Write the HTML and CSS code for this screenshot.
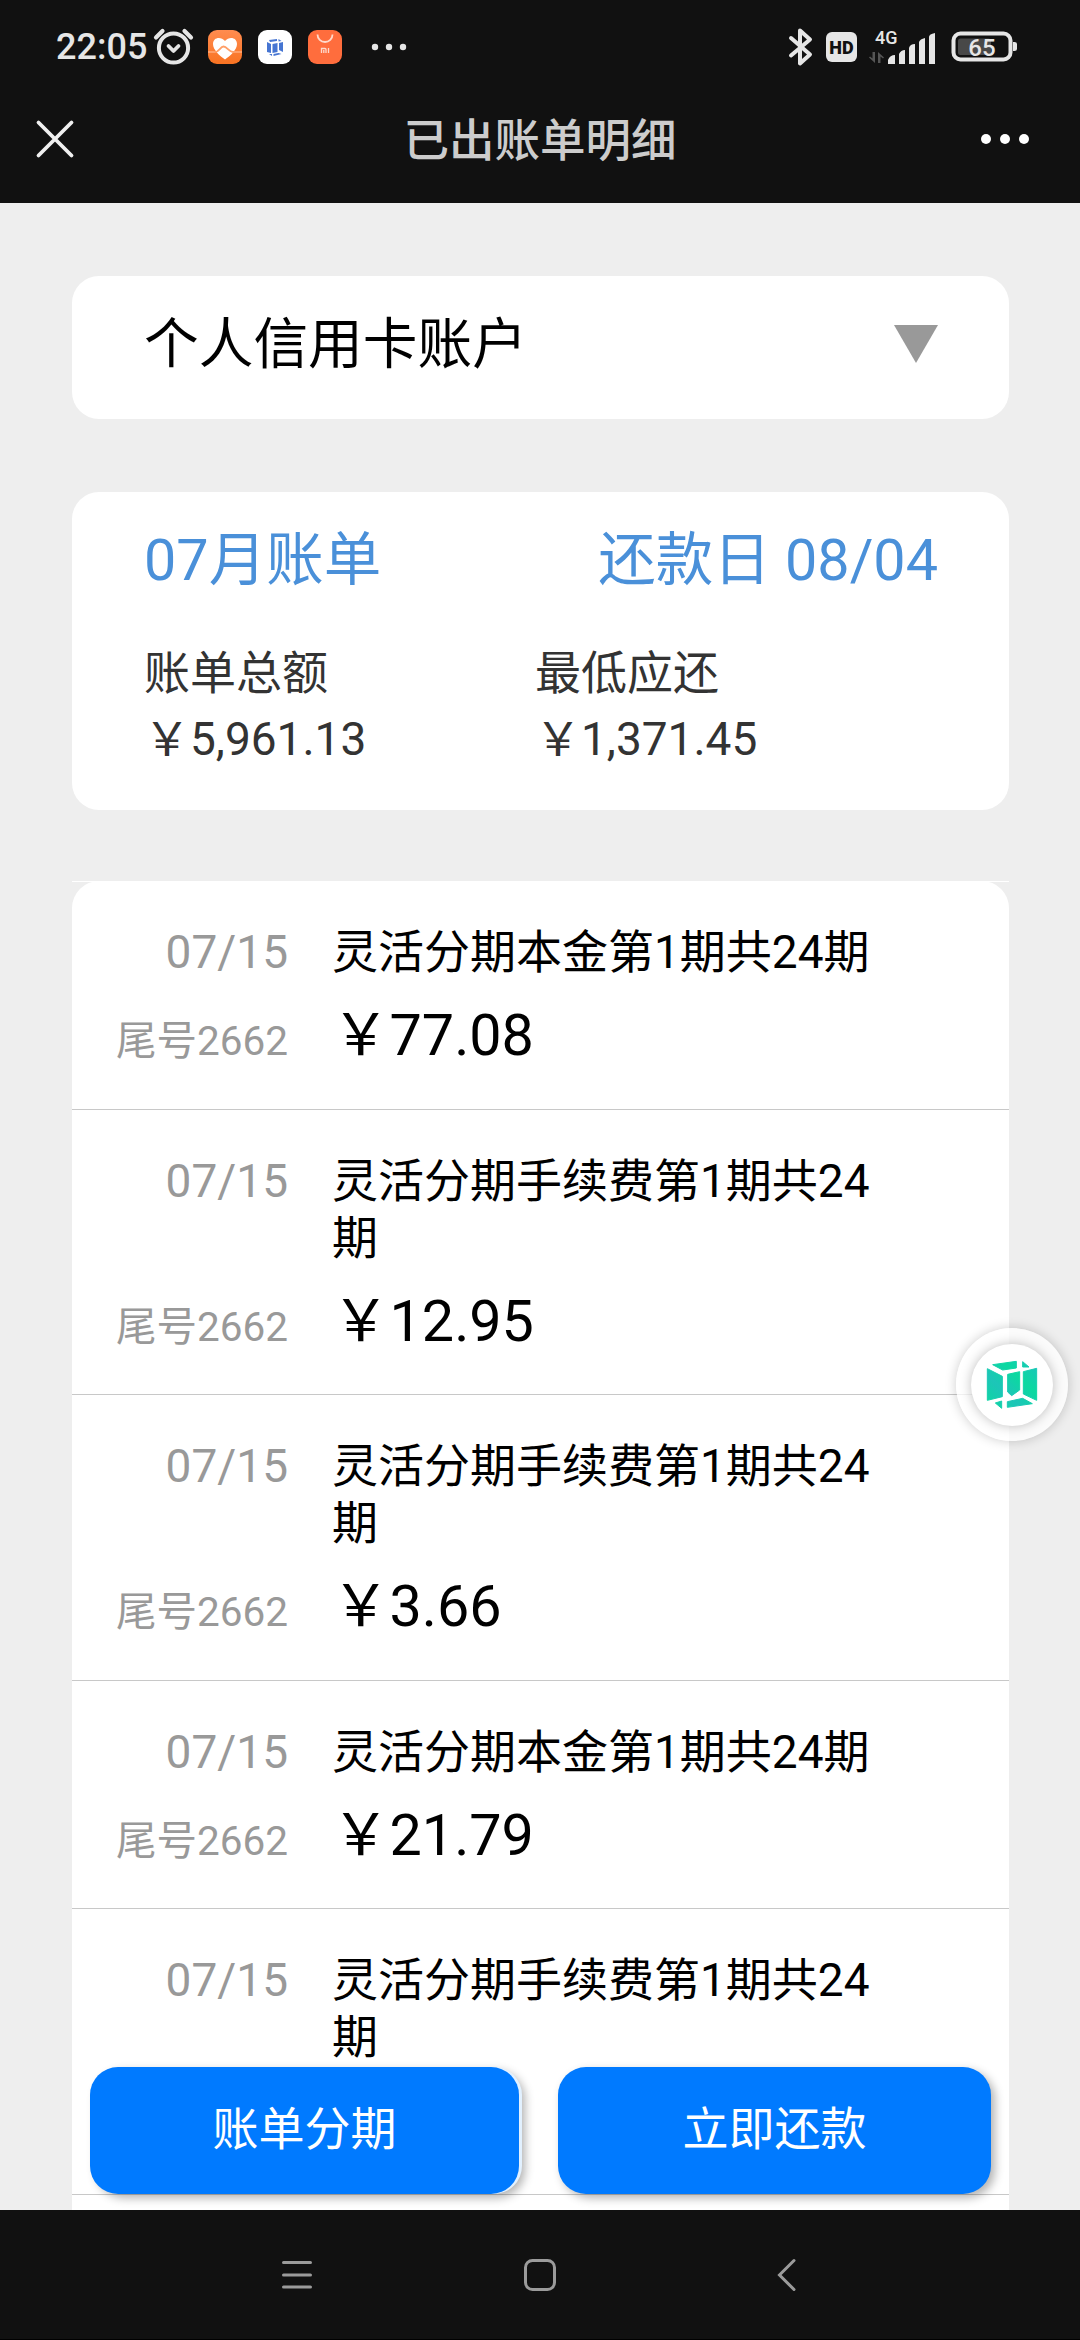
FILE: index.html
```
<!DOCTYPE html>
<html lang="zh-CN">
<head>
<meta charset="utf-8">
<title>已出账单明细</title>
<link rel="stylesheet" href="styles.css">
</head>
<body>
<div class="phone">
  <header class="top">
    <div class="status">
      <span class="clock">22:05</span>
      <svg class="alarm" width="42" height="40" viewBox="0 0 42 40" fill="none" stroke="#e6e6e6" stroke-linecap="round">
        <circle cx="20.5" cy="22" r="14.6" stroke-width="4"/>
        <path d="M15.500 20l5 5 5-5" stroke-width="3.800" stroke-linejoin="round"/>
        <path d="M3 11.500L9.500 5M38 11.500L31.500 5" stroke-width="4.200"/>
      </svg>
      <svg class="app" width="34" height="34" viewBox="0 0 34 34">
        <defs><linearGradient id="heart" x1="0" y1="0" x2="0" y2="1"><stop offset="0" stop-color="#ff8c50"/><stop offset="1" stop-color="#f97322"/></linearGradient></defs>
        <rect width="34" height="34" rx="9" fill="url(#heart)"/>
        <path d="M17 29.500C12 26 5 20 5 14C5 7 13 6 17 11C21 6 29 7 29 14C29 20 22 26 17 29.500Z" fill="#fff"/>
        <path d="M0 22H6C11 23 12 16.500 15.500 16.500C19 16.500 21 22 25 22H34" fill="none" stroke="#ff9f68" stroke-width="1.800"/>
      </svg>
      <svg class="app" width="34" height="34" viewBox="0 0 34 34">
        <rect width="34" height="34" rx="9" fill="#fff"/>
        <g transform="translate(9 9)" fill="#4675d2"><path d="M2 1l8-1v2L3 3zM11.500 0l3 2-3 .5zM0 3l4 2v9l-4-1zM5.500 5l5-1v9l-5 1zM12 4l4-1v10l-4-2zM2 15l3 0 0 2zM6.500 15l5-1 3 1-8 2z"/></g>
      </svg>
      <svg class="app" width="34" height="34" viewBox="0 0 34 34">
        <rect width="34" height="34" rx="9" fill="#ff6d3d"/>
        <path d="M9.500 4.500a7.500 7.500 0 0 0 15 0" fill="none" stroke="#ffd9cb" stroke-width="1.800"/>
        <path d="M13.500 23v-4.500h3.500q1 0 1 1V23M15.800 20v3M20.500 18v5" fill="none" stroke="#ffd9cb" stroke-width="1.300"/>
      </svg>
      <svg class="more-small" width="36" height="8" viewBox="0 0 36 8" fill="#e6e6e6"><circle cx="4" cy="4" r="3.200"/><circle cx="18" cy="4" r="3.200"/><circle cx="32" cy="4" r="3.200"/></svg>
      <svg class="bluetooth" width="26" height="40" viewBox="0 0 26 40" fill="none" stroke="#e6e6e6" stroke-width="4" stroke-linejoin="round" stroke-linecap="round"><path d="M3 11L22 27.500 12 36.500V3.500L22 12.500 3 28.500"/></svg>
      <span class="hd">HD</span>
      <svg class="signal" width="68" height="44" viewBox="0 -4 68 44" fill="#e6e6e6">
        <text class="net" x="7" y="15">4G</text>
        <path d="M7 23v11L1 28.500l1-1 2.500 2V23zM10 34V23l6 5.500-1 1-2.500-2V34z" fill="#555"/>
        <path d="M20 35v-4q2-5 7-5v9zM31 35V25q2-4 6-4v14zM41 35V19q1-4 6-4v20zM51 35V13q1-3 6-4v26zM61 35V8q0-3 6-4v31z"/>
      </svg>
      <svg class="battery" width="68" height="32" viewBox="0 0 68 32">
        <rect x="2.500" y="2.500" width="57" height="26" rx="7" fill="none" stroke="#e6e6e6" stroke-width="4"/>
        <rect x="7" y="7.500" width="33" height="16.500" rx="2.500" fill="#484848"/>
        <path d="M62 11h1.500q2.500 0 2.500 2v5q0 2-2.500 2H62z" fill="#e6e6e6"/>
        <text class="level" x="31" y="24.500" text-anchor="middle">65</text>
      </svg>
    </div>
    <div class="titlebar">
      <svg class="close" width="42" height="42" viewBox="0 0 42 42" stroke="#f0f0f0" stroke-width="3.800" stroke-linecap="round"><path d="M4.500 4.500l33 33M37.500 4.500l-33 33"/></svg>
      <h1>已出账单明细</h1>
      <svg class="more" width="50" height="12" viewBox="0 0 50 12" fill="#fff"><circle cx="6" cy="6" r="5"/><circle cx="25" cy="6" r="5"/><circle cx="44" cy="6" r="5"/></svg>
    </div>
  </header>

  <main>
    <section class="card account">
      <span>个人信用卡账户</span>
      <svg width="44" height="38" viewBox="0 0 44 38"><path d="M0 0H44L22 38Z" fill="#999"/></svg>
    </section>

    <section class="card summary">
      <div class="heading"><span>07月账单</span><span>还款日 08/04</span></div>
      <dl>
        <div><dt>账单总额</dt><dd>￥5,961.13</dd></div>
        <div><dt>最低应还</dt><dd>￥1,371.45</dd></div>
      </dl>
    </section>

    <div class="records">
      <ul>
        <li><span class="date">07/15</span><span class="name">灵活分期本金第1期共24期</span><span class="tail">尾号2662</span><span class="amount">￥77.08</span></li>
        <li><span class="date">07/15</span><span class="name">灵活分期手续费第1期共24期</span><span class="tail">尾号2662</span><span class="amount">￥12.95</span></li>
        <li><span class="date">07/15</span><span class="name">灵活分期手续费第1期共24期</span><span class="tail">尾号2662</span><span class="amount">￥3.66</span></li>
        <li><span class="date">07/15</span><span class="name">灵活分期本金第1期共24期</span><span class="tail">尾号2662</span><span class="amount">￥21.79</span></li>
        <li><span class="date">07/15</span><span class="name">灵活分期手续费第1期共24期</span></li>
        <li></li>
      </ul>
    </div>

    <div class="actions">
      <button class="split" type="button">账单分期</button>
      <button type="button">立即还款</button>
    </div>

    <div class="ball">
      <div class="ball-core">
        <svg width="54" height="52" viewBox="0 0 162 156">
          <defs><linearGradient id="cube" x1="0" y1="1" x2="1" y2="0"><stop offset="0" stop-color="#0bd9a0"/><stop offset=".35" stop-color="#1dc5b8"/><stop offset=".65" stop-color="#0bd9a0"/><stop offset="1" stop-color="#1cc3bd"/></linearGradient></defs>
          <g fill="url(#cube)" stroke="url(#cube)" stroke-width="3" stroke-linejoin="round">
            <path d="M23 17L94 7V27L53 33ZM113 8L132 24 113 24ZM7 29L52 52V113L7 124ZM68 46L104 38V93L80 110 68 99ZM115 38L155 28V124L115 105ZM31 132L50 126V148ZM67 128L113 118 142 134 67 145Z"/>
          </g>
        </svg>
      </div>
    </div>
  </main>

  <nav>
    <svg width="32" height="34" viewBox="0 0 32 34" stroke="#9b9b9b" stroke-width="3" stroke-linecap="round"><path d="M2.500 4.500h27M2.500 17h27M2.500 29h27"/></svg>
    <svg width="34" height="34" viewBox="0 0 34 34" fill="none" stroke="#9b9b9b" stroke-width="3"><rect x="2.500" y="2.500" width="29" height="29" rx="7"/></svg>
    <svg width="22" height="34" viewBox="0 0 22 34" fill="none" stroke="#9b9b9b" stroke-width="3" stroke-linecap="round"><path d="M19 2.500L4.500 17 19 31.500"/></svg>
  </nav>
</div>
</body>
</html>
```
FILE: styles.css
```
* { box-sizing: border-box; margin: 0; padding: 0; }
body { font-family: Roboto, "Noto Sans CJK SC", sans-serif; background: #eee; }
svg { display: block; flex: none; }
ul { list-style: none; }

.phone { width: 1080px; height: 2340px; display: flex; flex-direction: column; overflow: hidden; }

/* status bar and title */
.top { height: 203px; background: #111; flex: none; }
.status { height: 93px; padding-left: 56px; display: flex; align-items: center; }
.clock { width: 97px; font-size: 36px; font-weight: 500; line-height: 40px; color: #e6e6e6; }
.alarm { margin-top: -2px; }
.app { margin-left: 16px; }
.alarm + .app { margin-left: 13px; }
.more-small { margin-left: 29px; }
.bluetooth { margin-left: 381px; }
.hd { width: 31px; height: 30px; margin-left: 12px; border-radius: 6px; background: #e6e6e6; color: #111; font-size: 18px; font-weight: 900; line-height: 31px; text-align: center; }
.signal { margin-left: 11px; }
.net { font-size: 18px; font-weight: 500; }
.battery { margin-left: 15px; }
.level { font-size: 24px; font-weight: 500; fill: #e6e6e6; }
.titlebar { height: 92px; padding: 0 50px 0 34px; display: grid; grid-template-columns: 50px 1fr 50px; align-items: center; }
.titlebar h1 { color: #ccc; font-size: 45.500px; font-weight: 500; line-height: 60px; padding: 6px 0 0 16px; text-align: center; }

/* page body */
main { flex: 1; min-height: 0; padding: 73px 71px 0 72px; position: relative; overflow: hidden; background: #eee; }
.card { background: #fff; border-radius: 27px; }
.account { height: 143px; padding: 0 71px 6px 72px; display: flex; align-items: center; justify-content: space-between; font-size: 54.700px; line-height: 72px; }
.account span { padding-bottom: 1px; }
.account svg { margin-top: -1px; }
.summary { height: 318px; margin-top: 73px; padding: 35px 71px 0 72px; }
.heading { display: flex; justify-content: space-between; color: #4a90d9; font-size: 57.500px; line-height: 68px; }
.summary dl { display: grid; grid-template-columns: 391px 1fr; margin-top: 45px; font-size: 46px; line-height: 66px; color: #333; }

/* transaction list */
.records { margin-top: 71px; border-top: 1px solid #fff; }
.records ul { background: #fff; border-radius: 27px 27px 0 0; margin-top: -1px; }
li { height: 285.600px; padding: 43px 0 0 43px; border-bottom: 1px solid #c8c8c8; display: grid; grid-template-columns: 173px 560px; column-gap: 44px; row-gap: 21px; align-content: start; align-items: end; }
li:nth-child(1), li:nth-child(4) { height: 228.600px; }
.date { font-size: 46px; line-height: 57px; color: #999; text-align: right; align-self: start; }
.name { font-size: 46px; line-height: 57px; color: #000; }
.tail { font-size: 40.500px; line-height: 57px; color: #999; text-align: right; white-space: nowrap; }
.amount { font-size: 57.500px; line-height: 68px; color: #000; }

/* buttons over the list */
.actions { position: absolute; left: 90px; bottom: 16px; width: 901px; height: 127px; display: grid; grid-template-columns: 429px 433px; column-gap: 39px; }
.actions button { border: 0; border-radius: 28px; background: #007aff; color: #fff; font: 46px/64px Roboto, "Noto Sans CJK SC", sans-serif; padding-bottom: 4px; box-shadow: 4px 4px 10px rgba(0, 0, 0, .3); }
.actions .split { box-shadow: 3px 0 0 #e2f1ff, 6px 4px 10px rgba(0, 0, 0, .3); }

/* floating assistant */
.ball { position: absolute; left: 956px; top: 1125px; width: 112px; height: 113px; border-radius: 50%; background: rgba(255, 255, 255, .75); box-shadow: 0 0 12px rgba(0, 0, 0, .2); display: flex; align-items: center; justify-content: center; }
.ball-core { width: 82px; height: 82px; border-radius: 50%; background: #fff; box-shadow: 0 0 12px rgba(0, 0, 0, .25); display: flex; align-items: center; justify-content: center; }

nav { height: 130px; flex: none; background: #111; border-bottom: 1px solid #000; padding: 0 283px 0 281px; display: grid; grid-template-columns: 242px 1fr 22px; align-items: center; }
```
